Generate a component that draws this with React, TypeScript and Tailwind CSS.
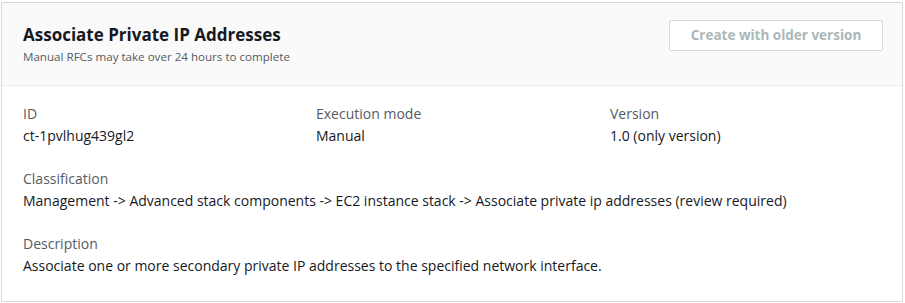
const fields = [
  { label: 'ID', value: 'ct-1pvlhug439gl2' },
  { label: 'Execution mode', value: 'Manual' },
  { label: 'Version', value: '1.0 (only version)' },
];

const App = () => {
  return (
    <div className="w-[905px] h-[303px] bg-white pt-[2px] pl-[1px] font-['Open_Sans',sans-serif]">
      <div className="w-[902px] h-[300px] border border-[#d5dbdb] rounded-[1px] overflow-hidden bg-white">
        <div className="flex items-start justify-between bg-[#fafafa] border-b border-[#eaeded] h-[83px] pl-[21px] pr-[19px] pt-[17px]">
          <div className="pt-[2px]">
            <h2 className="text-[17px] leading-[26px] font-bold text-[#16191f]">Associate Private IP Addresses</h2>
            <p className="text-[11.6px] leading-[18px] text-[#545b64]">Manual RFCs may take over 24 hours to complete</p>
          </div>
          <button className="h-[31px] w-[214px] border border-[#d5dbdb] bg-white text-[13.5px] font-bold text-[#aab7b8] rounded-[2px]">
            Create with older version
          </button>
        </div>
        <div className="px-[21px] pt-[17px] text-[14px] leading-[22px]">
          <div className="grid grid-cols-[293px_294px_1fr]">
            {fields.map((f) => (
              <div key={f.label}>
                <div className="text-[#545b64]">{f.label}</div>
                <div className="text-[#16191f]">{f.value}</div>
              </div>
            ))}
          </div>
          <div className="mt-[21px]">
            <div className="text-[#545b64]">Classification</div>
            <div className="text-[#16191f]">
              Management -&gt; Advanced stack components -&gt; EC2 instance stack -&gt; Associate private ip addresses (review required)
            </div>
          </div>
          <div className="mt-[21px]">
            <div className="text-[#545b64]">Description</div>
            <div className="text-[#16191f]">
              Associate one or more secondary private IP addresses to the specified network interface.
            </div>
          </div>
        </div>
      </div>
    </div>
  );
};

export default App;
